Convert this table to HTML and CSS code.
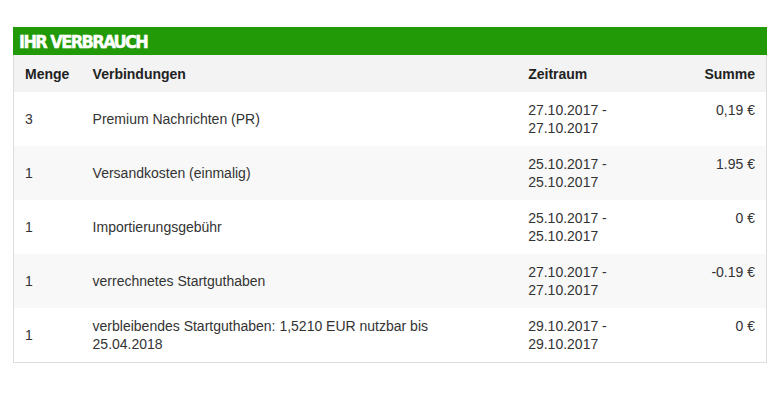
FILE: index.html
```html
<!DOCTYPE html>
<html lang="de">
<head>
<meta charset="utf-8">
<title>Ihr Verbrauch</title>
<link rel="stylesheet" href="styles.css">
</head>
<body>
<section class="usage">
  <h2 class="usage-title">IHR VERBRAUCH</h2>
  <table class="usage-table">
    <colgroup>
      <col class="c-qty">
      <col class="c-desc">
      <col class="c-period">
      <col class="c-sum">
    </colgroup>
    <thead>
      <tr>
        <th class="qty">Menge</th>
        <th class="desc">Verbindungen</th>
        <th class="period">Zeitraum</th>
        <th class="sum">Summe</th>
      </tr>
    </thead>
    <tbody>
      <tr>
        <td class="qty">3</td>
        <td class="desc">Premium Nachrichten (PR)</td>
        <td class="period">27.10.2017 - 27.10.2017</td>
        <td class="sum">0,19 €</td>
      </tr>
      <tr>
        <td class="qty">1</td>
        <td class="desc">Versandkosten (einmalig)</td>
        <td class="period">25.10.2017 - 25.10.2017</td>
        <td class="sum">1.95 €</td>
      </tr>
      <tr>
        <td class="qty">1</td>
        <td class="desc">Importierungsgebühr</td>
        <td class="period">25.10.2017 - 25.10.2017</td>
        <td class="sum">0 €</td>
      </tr>
      <tr>
        <td class="qty">1</td>
        <td class="desc">verrechnetes Startguthaben</td>
        <td class="period">27.10.2017 - 27.10.2017</td>
        <td class="sum">-0.19 €</td>
      </tr>
      <tr>
        <td class="qty">1</td>
        <td class="desc">verbleibendes Startguthaben: 1,5210 EUR nutzbar bis 25.04.2018</td>
        <td class="period">29.10.2017 - 29.10.2017</td>
        <td class="sum">0 €</td>
      </tr>
    </tbody>
  </table>
</section>
</body>
</html>
```
FILE: styles.css
```css
html, body {
  margin: 0;
  padding: 0;
  background: #ffffff;
}

body {
  font-family: "Liberation Sans", Arial, sans-serif;
  font-size: 14px;
  line-height: 18px;
  color: #333333;
}

.usage {
  margin: 27px 13px 0 13px;
  width: 754px;
}

.usage-title {
  margin: 0;
  height: 28px;
  background: #229a08;
  color: #ffffff;
  font-family: "DejaVu Sans Condensed", "DejaVu Sans", sans-serif;
  font-weight: 700;
  font-size: 18px;
  line-height: 29px;
  padding-left: 6px;
  letter-spacing: -1.6px;
  -webkit-text-stroke: 0.4px #ffffff;
}

.usage-table {
  width: 754px;
  border-collapse: collapse;
  table-layout: fixed;
  border: 1px solid #dddddd;
  border-top: none;
}

.c-qty { width: 68px; }
.c-desc { width: 435px; }
.c-period { width: 135px; }
.c-sum { width: 114px; }

.usage-table th {
  background: #f3f3f3;
  font-weight: 700;
  color: #222222;
  text-align: left;
  padding: 10px 11px 9px 11px;
  vertical-align: middle;
}

.usage-table td {
  padding: 9px 11px;
  vertical-align: middle;
}

.usage-table td.desc {
  padding-right: 30px;
}

.usage-table tbody tr:nth-child(even) td {
  background: #f8f8f8;
}

.usage-table td.period,
.usage-table td.sum {
  vertical-align: top;
}

.usage-table .sum {
  text-align: right;
}
```
